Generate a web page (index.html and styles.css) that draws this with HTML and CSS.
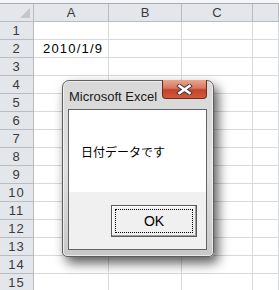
FILE: index.html
```html
<!DOCTYPE html>
<html lang="ja">
<head>
    <meta charset="UTF-8">
    <title>Excel</title>
    <link rel="stylesheet" href="styles.css">
</head>
<body>

    <div class="topbar"></div>

    <div class="sheet">
        <div class="corner"><span class="tri"></span></div>
        <div class="colhead">A</div>
        <div class="colhead">B</div>
        <div class="colhead">C</div>
        <div class="colhead"></div>

        <div class="rowhead">1</div><div class="cell"></div><div class="cell"></div><div class="cell"></div><div class="cell"></div>
        <div class="rowhead">2</div><div class="cell value">2010/1/9</div><div class="cell"></div><div class="cell"></div><div class="cell"></div>
        <div class="rowhead">3</div><div class="cell"></div><div class="cell"></div><div class="cell"></div><div class="cell"></div>
        <div class="rowhead">4</div><div class="cell"></div><div class="cell"></div><div class="cell"></div><div class="cell"></div>
        <div class="rowhead">5</div><div class="cell"></div><div class="cell"></div><div class="cell"></div><div class="cell"></div>
        <div class="rowhead">6</div><div class="cell"></div><div class="cell"></div><div class="cell"></div><div class="cell"></div>
        <div class="rowhead">7</div><div class="cell"></div><div class="cell"></div><div class="cell"></div><div class="cell"></div>
        <div class="rowhead">8</div><div class="cell"></div><div class="cell"></div><div class="cell"></div><div class="cell"></div>
        <div class="rowhead">9</div><div class="cell"></div><div class="cell"></div><div class="cell"></div><div class="cell"></div>
        <div class="rowhead">10</div><div class="cell"></div><div class="cell"></div><div class="cell"></div><div class="cell"></div>
        <div class="rowhead">11</div><div class="cell"></div><div class="cell"></div><div class="cell"></div><div class="cell"></div>
        <div class="rowhead">12</div><div class="cell"></div><div class="cell"></div><div class="cell"></div><div class="cell"></div>
        <div class="rowhead">13</div><div class="cell"></div><div class="cell"></div><div class="cell"></div><div class="cell"></div>
        <div class="rowhead">14</div><div class="cell"></div><div class="cell"></div><div class="cell"></div><div class="cell"></div>
        <div class="rowhead">15</div><div class="cell"></div><div class="cell"></div><div class="cell"></div><div class="cell"></div>
    </div>

    <div class="dialog">
        <div class="titlebar">
            <span class="title">Microsoft Excel</span>
            <div class="close">
                <svg width="17" height="11" viewBox="0 0 17 11">
                    <path d="M3.5 2 L13.5 9 M13.5 2 L3.5 9" stroke="#3a3a3a" stroke-width="4.4" stroke-linecap="square" fill="none"/>
                    <path d="M3.5 2 L13.5 9 M13.5 2 L3.5 9" stroke="#ffffff" stroke-width="2.6" stroke-linecap="square" fill="none"/>
                </svg>
            </div>
        </div>
        <div class="client">
            <div class="message">日付データです</div>
            <div class="buttons">
                <div class="ok"><span class="focus">OK</span></div>
            </div>
        </div>
    </div>

</body>
</html>
```

FILE: styles.css
```css
body { margin: 0; background: #fff; font-family: "Liberation Sans", "Noto Sans CJK JP", sans-serif; overflow: hidden; }
.topbar { height: 3px; background: #f4f5f7; border-bottom: 1px solid #a9adb3; }
.sheet { display: grid; grid-template-columns: 34px 75px 73px 71px 1fr; grid-auto-rows: 18px; }
.sheet > div { box-sizing: border-box; border-right: 1px solid #d8d9db; border-bottom: 1px solid #d8d9db; }
.corner, .colhead, .rowhead { background: #e3e6ea; }
.sheet > .corner, .sheet > .colhead, .sheet > .rowhead { border-color: #b8bcc2; }
.corner { position: relative; }
.tri { position: absolute; right: 3px; bottom: 3px; width: 0; height: 0; border-left: 10px solid transparent; border-bottom: 10px solid #c3c7cc; }
.colhead { font-size: 13px; color: #3a3a3a; text-align: center; line-height: 17px; }
.rowhead { font-size: 13px; color: #3a3a3a; text-align: center; line-height: 17px; letter-spacing: 1px; }
.value { font-size: 13px; color: #000; line-height: 17px; padding-left: 9px; letter-spacing: 1.2px; }

.dialog {
    position: absolute; left: 62px; top: 80px; width: 152px; height: 177px; box-sizing: border-box;
    border: 1px solid #5e5e5e; border-radius: 7px 7px 5px 5px;
    background: linear-gradient(to bottom, #d8d8d8, #e0e0e0 50%, #c8c8c8);
    box-shadow: 4px 6px 12px rgba(0, 0, 0, 0.65), 0 0 0 1px rgba(255, 255, 255, 0.6) inset;
}
.titlebar { height: 28px; position: relative; }
.title { position: absolute; left: 6px; top: 8px; font-family: "Liberation Sans", sans-serif; font-size: 13px; color: #1a1a1a; }
.close {
    position: absolute; right: 6px; top: -1px; width: 45px; height: 19px; box-sizing: border-box;
    border: 1px solid #6b2c20; border-top: none; border-radius: 0 0 4px 4px;
    background: linear-gradient(to bottom, #e9a690 0%, #d8765e 45%, #c2432a 55%, #d25a3c 100%);
    display: flex; align-items: center; justify-content: center;
}
.client { margin: 0 6px 0 5px; border: 1px solid #646464; background: #f0f0f0; height: 141px; box-sizing: border-box; display: flex; flex-direction: column; }
.message { background: #fff; height: 82px; box-sizing: border-box; padding: 35px 0 0 12px; font-family: "Noto Sans CJK JP", sans-serif; font-size: 12px; line-height: 14px; color: #000; }
.buttons { flex: 1; display: flex; justify-content: flex-end; padding: 13px 9px 0 0; }
.ok { width: 86px; height: 32px; box-sizing: border-box; border: 1px solid #5a5a5a; box-shadow: inset -1px -1px 0 #a0a0a0, inset 1px 1px 0 #fff; background: #f0f0f0; padding: 3px; }
.focus { display: block; height: 100%; box-sizing: border-box; border: 1px dotted #000; text-align: center; font-family: "Liberation Sans", sans-serif; font-size: 14px; line-height: 22px; color: #000; }
```
